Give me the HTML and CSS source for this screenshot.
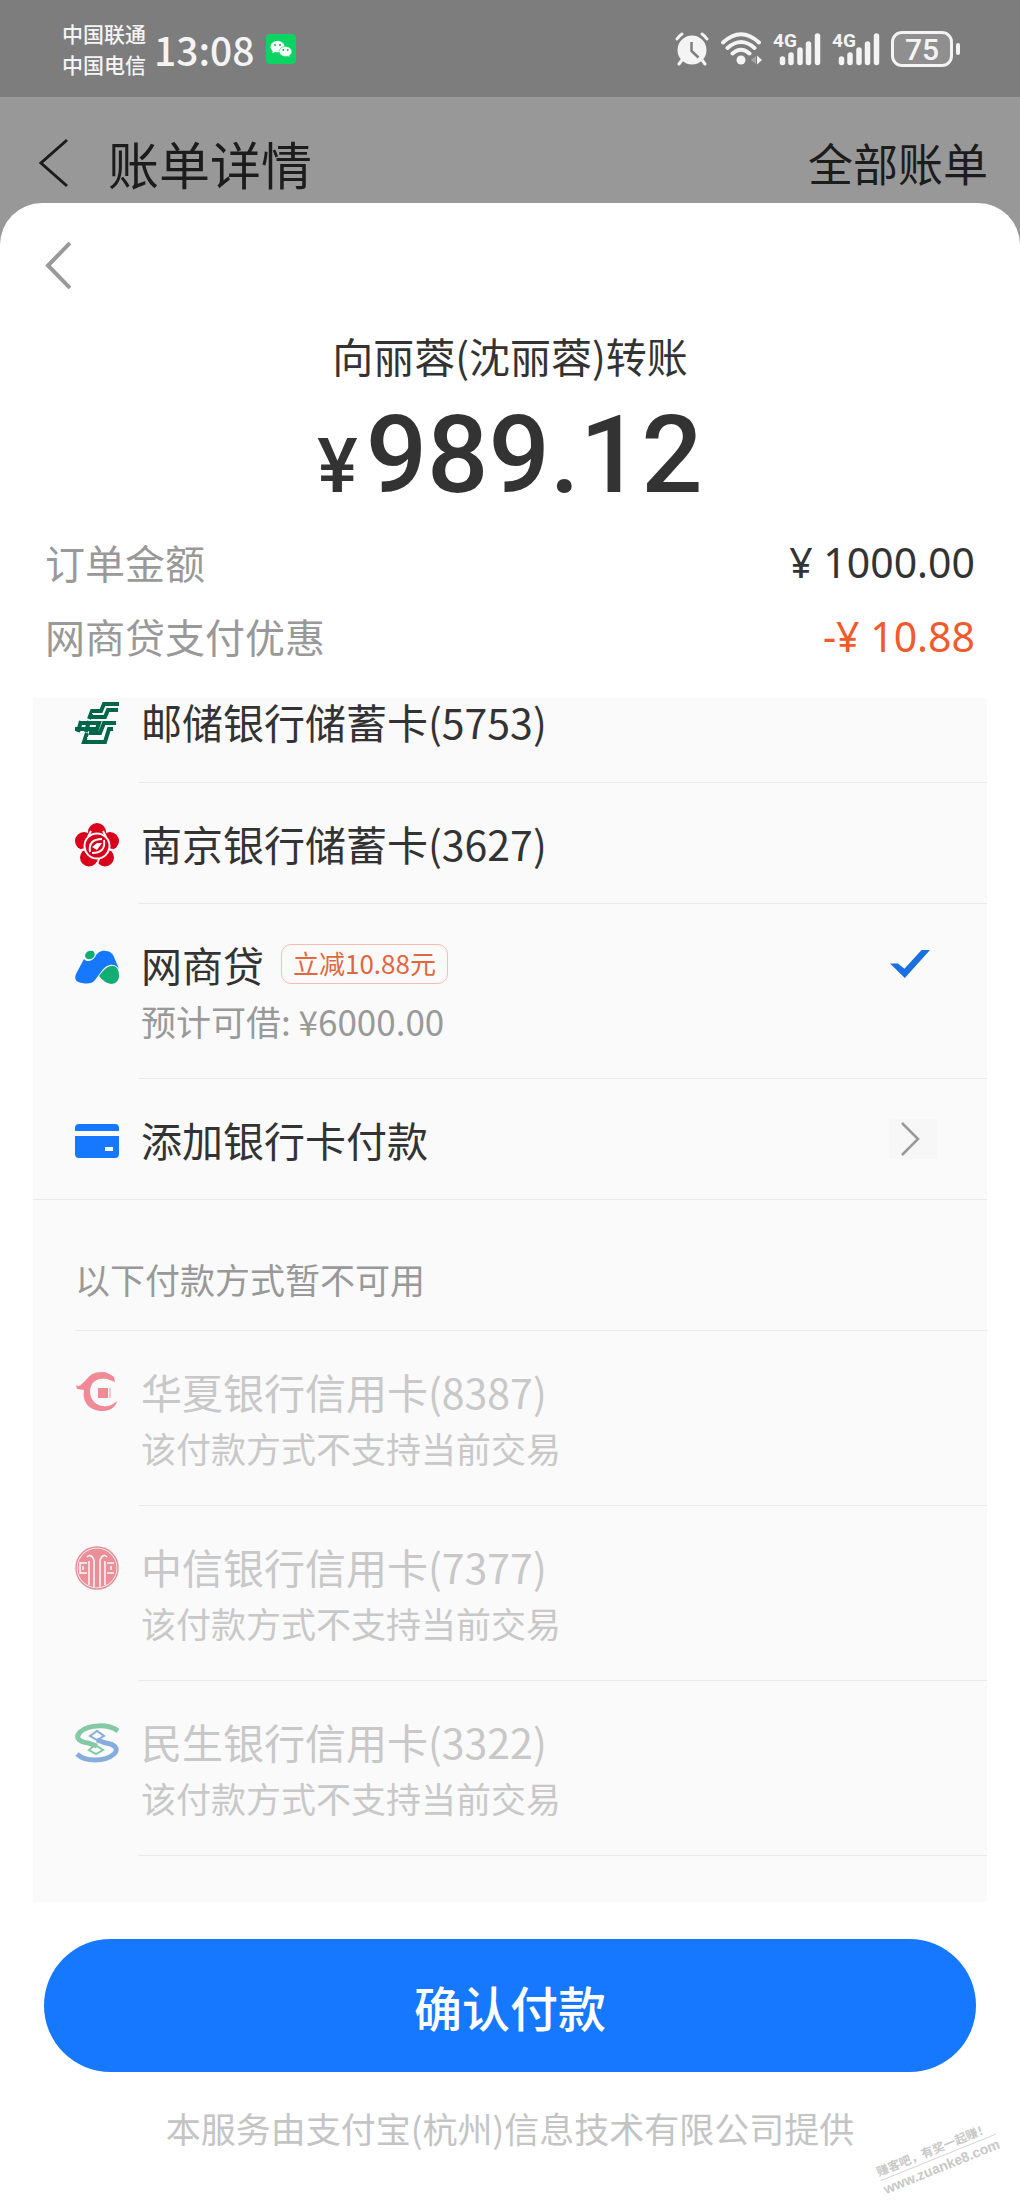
FILE: index.html
```html
<!DOCTYPE html>
<html lang="zh-CN">
<head>
<meta charset="utf-8">
<meta name="viewport" content="width=device-width, initial-scale=1">
<title>账单详情</title>
<link rel="stylesheet" href="styles.css">
</head>
<body>
<div class="status">
  <div class="carriers"><span>中国联通</span><span>中国电信</span></div>
  <span class="clock">13:08</span>
  <svg class="wechat" width="30" height="30" viewBox="0 0 30 30" aria-hidden="true">
    <rect width="30" height="30" rx="4" fill="#0bd463"/>
    <path d="M11.500 7C7.500 7 4.500 9.500 4.500 12.700c0 1.800.900 3.300 2.400 4.300L6.200 19.200l2.700-1.300c.800.200 1.700.400 2.600.400 4 0 7-2.500 7-5.600S15.500 7 11.500 7z" fill="#fff"/>
    <path d="M19.500 12.500c-3.600 0-6.300 2.200-6.300 5s2.700 5 6.300 5c.800 0 1.500-.100 2.200-.300l2.300 1.200-.600-2c1.500-.900 2.400-2.300 2.400-3.900 0-2.800-2.700-5-6.300-5z" fill="#fff" stroke="#0bd463" stroke-width=".6"/>
    <g fill="#0bb455"><circle cx="9" cy="11" r="1"/><circle cx="14" cy="11" r="1"/><circle cx="17.300" cy="16" r=".9"/><circle cx="21.700" cy="16" r=".9"/></g>
  </svg>
  <div class="indicators">
    <svg width="34" height="34" viewBox="0 0 34 34" aria-hidden="true">
      <circle cx="17" cy="18" r="14.500" fill="#f4f4f4"/>
      <g stroke="#f4f4f4" stroke-width="3" stroke-linecap="round" fill="none"><path d="M2 7Q4 4 7 2M27 2Q30 4 32 7M7 28l-3 4M27 28l3 4"/></g>
      <path d="M16.500 10v9l7 6.500" fill="none" stroke="#7d7d7d" stroke-width="2.500"/>
    </svg>
    <svg width="42" height="34" viewBox="0 0 42 34" aria-hidden="true">
      <g fill="none" stroke="#f4f4f4" stroke-width="4" stroke-linecap="round"><path d="M3 10.500Q21-6 39 10.500M7.500 16Q21 4 34.500 16M12.500 21.500Q21 14 29.500 21.500"/></g>
      <circle cx="21" cy="28" r="4.500" fill="#f4f4f4"/>
      <path d="M31 28l5-4v8z" fill="#a5a5a5"/><path d="M37 23.500l5 4.500-5 4.500z" fill="#f4f4f4"/>
    </svg>
    <div class="signal"><span>4G</span>
      <svg width="48" height="34" viewBox="0 0 48 34" aria-hidden="true"><path d="M9.500 27v3.500M18 23v7.500M27 18v12.500M35.500 12v18.500M44.500 4v26.500" stroke="#f4f4f4" stroke-width="5.500" stroke-linecap="round"/></svg>
    </div>
    <div class="signal"><span>4G</span>
      <svg width="48" height="34" viewBox="0 0 48 34" aria-hidden="true"><path d="M9.500 27v3.500M18 23v7.500M27 18v12.500M35.500 12v18.500M44.500 4v26.500" stroke="#f4f4f4" stroke-width="5.500" stroke-linecap="round"/></svg>
    </div>
    <div class="battery"><span>75</span></div>
  </div>
</div>

<header class="bar">
  <button class="plain" type="button" aria-label="返回">
    <svg width="32" height="50" viewBox="0 0 32 50"><path d="M29 2L3 25l26 23" fill="none" stroke="#1c1c1c" stroke-width="3"/></svg>
  </button>
  <h1>账单详情</h1>
  <a class="all" href="#bills">全部账单</a>
</header>

<main class="sheet">
  <button class="plain back" type="button" aria-label="关闭">
    <svg width="26" height="47" viewBox="0 0 26 47"><path d="M25 1L3 23.500 25 46" fill="none" stroke="#999" stroke-width="4"/></svg>
  </button>
  <h2 class="payee">向丽蓉(沈丽蓉)转账</h2>
  <p class="amount"><span class="yen">¥</span><span>989.12</span></p>
  <dl class="summary">
    <div><dt>订单金额</dt><dd>¥ 1000.00</dd></div>
    <div><dt>网商贷支付优惠</dt><dd class="off">-¥ 10.88</dd></div>
  </dl>

  <form class="pay">
    <div class="list">
      <label class="row first">
        <svg class="logo" viewBox="0 0 44 44" aria-hidden="true"><g fill="none" stroke="#006649" stroke-width="4"><path d="M44 3H29l-3 7h-9l-3 8M43 9H33l-3 7H16M5 22h19l-2 6H0M6 20L3 31M14 20l-3 11M41 22H29l-4 10H14M38 28h-4l-4 13H9l3-9"/></g><path d="M12 36.500h14M17 12.500h12" stroke="#f9f9fa" stroke-width="1"/></svg>
        <span class="text"><span class="name">邮储银行储蓄卡(5753)</span></span>
        <input class="tick" type="radio" name="method">
      </label>
      <label class="row">
        <svg class="logo" viewBox="0 0 44 44" aria-hidden="true"><g fill="#d9001b"><circle cx="22" cy="9" r="9"/><circle cx="9" cy="18" r="9"/><circle cx="35" cy="18" r="9"/><circle cx="14" cy="34.500" r="9"/><circle cx="30" cy="34.500" r="9"/></g><circle cx="22" cy="23" r="12.500" fill="#d9001b" stroke="#fafafa" stroke-width="2"/><path d="M16 8l-3 6M28 8l3 6M6 27l5-1M38 27l-5-1M24 36l-3 8" stroke="#fafafa" stroke-width="2"/><path d="M15 29Q13 16 27 16M29 17Q31 30 17 30" fill="none" stroke="#fafafa" stroke-width="2"/><path d="M17 24l5-4h5l-5 7z" fill="#fafafa"/></svg>
        <span class="text"><span class="name">南京银行储蓄卡(3627)</span></span>
        <input class="tick" type="radio" name="method">
      </label>
      <label class="row">
        <svg class="logo" viewBox="0 0 44 44" aria-hidden="true"><path d="M1 30L9 15c2 3 8 3 11-2 2-4 6-7 11-6 4 0 7 3 8 6l5 12c-4-6-12-6-18 3l-6 8c-3 4-8 4-13 3C1 38-1 35 1 30z" fill="#1677ff"/><path d="M10 11c1-4 5-5 8-4 3 2 2 7-2 8-3 1-6 0-6-4z" fill="#12ad73"/><path d="M24 32c5-7 10-11 15-10 4 1 5 6 5 10 0 5-4 8-8 8-5-1-9-4-12-8z" fill="#12ad73"/></svg>
        <span class="text">
          <span class="name">网商贷<span class="badge">立减10.88元</span></span>
          <span class="note">预计可借: ¥6000.00</span>
        </span>
        <input class="tick" type="radio" name="method" checked>
      </label>
      <a class="row wide" href="#add">
        <svg class="logo" viewBox="0 0 44 44" aria-hidden="true"><path d="M0 12V9q0-4 4-4h36q4 0 4 4v3zM0 17h44v18q0 4-4 4H4q-4 0-4-4z" fill="#1677ff"/><rect x="30" y="28" width="8" height="4" fill="#fff"/></svg>
        <span class="text"><span class="name">添加银行卡付款</span></span>
        <svg class="go" width="48" height="40" viewBox="0 0 48 40" aria-hidden="true"><path d="M13 4l16 16-16 16" fill="none" stroke="#999" stroke-width="2.500"/></svg>
      </a>
      <h3 class="section">以下付款方式暂不可用</h3>
      <label class="row off-row">
        <svg class="logo" viewBox="0 0 44 44" aria-hidden="true"><path d="M1 14c4 3 6-2 9-4 5-6 8-9 17-9 5 0 8 2 12 5l1 5-8-3c-6-1-12 0-15 5-5 9 0 21 11 22 7 1 10-2 14-5-1 6-7 10-14 10C15 40 7 32 9 19L2 18z" fill="#f08a96"/><rect x="23" y="17" width="10" height="10" fill="#f08a96"/><path d="M35 17v10" stroke="#f8c9ce" stroke-width="2"/></svg>
        <span class="text"><span class="name">华夏银行信用卡(8387)</span><span class="note">该付款方式不支持当前交易</span></span>
        <input class="tick" type="radio" name="method" disabled>
      </label>
      <label class="row off-row">
        <svg class="logo" viewBox="0 0 44 44" aria-hidden="true"><circle cx="22" cy="22" r="21" fill="#fafafa" stroke="#ea8f98" stroke-width="1.500"/><circle cx="22" cy="22" r="19.500" fill="#ea8f98"/><g fill="none" stroke="#fafafa" stroke-width="1.500"><path d="M19 41V14Q16 7 12 11M25 41V14Q28 7 32 11M14 39V15M30 39V15"/><path d="M12 17H5v10h7M8 20v4M39 17h-7M39 27h-7M36 20v4"/></g></svg>
        <span class="text"><span class="name">中信银行信用卡(7377)</span><span class="note">该付款方式不支持当前交易</span></span>
        <input class="tick" type="radio" name="method" disabled>
      </label>
      <label class="row off-row">
        <svg class="logo" viewBox="0 0 44 44" aria-hidden="true"><g fill="none" stroke="#85c8a4"><path d="M43 10C34 3 14 3 5 11-1 18 6 21 13 22l9 3" stroke-width="5"/><path d="M14 29l6-5 8 5-7 4z" stroke-width="2"/></g><g fill="none" stroke="#86aedd"><path d="M2 33c8 8 28 8 37 0 6-6-1-10-8-11l-9-3" stroke-width="5"/><path d="M15 15l7-5 7 5-7 4z" stroke-width="2"/></g></svg>
        <span class="text"><span class="name">民生银行信用卡(3322)</span><span class="note">该付款方式不支持当前交易</span></span>
        <input class="tick" type="radio" name="method" disabled>
      </label>
    </div>
    <button class="confirm" type="submit">确认付款</button>
  </form>
  <p class="provider">本服务由支付宝(杭州)信息技术有限公司提供</p>
  <div class="mark"><span>赚客吧，有奖一起赚！</span><span class="url">www.zuanke8.com</span></div>
</main>
</body>
</html>
```
FILE: styles.css
```css
* { box-sizing: border-box; }
body {
  display: flex;
  flex-direction: column;
  min-height: 100vh;
  margin: 0;
  background: #989898;
  color: #333;
  font-family: "Noto Sans CJK SC", "Noto Sans", sans-serif;
  font-size: 41px;
}
h1, h2, h3, p, dl, dd { margin: 0; font-weight: 400; }
svg { display: block; flex: none; }
a { color: inherit; text-decoration: none; }
.plain { border: 0; padding: 0; background: none; display: block; }

.status {
  display: flex;
  align-items: center;
  height: 97px;
  padding: 0 60px 0 62px;
  background: #7d7d7d;
  color: #f4f4f4;
}
.carriers { display: flex; flex-direction: column; font-size: 21px; line-height: 31px; font-weight: 500; }
.clock { margin-left: 8px; font-size: 39px; line-height: 48px; font-weight: 500; }
.wechat { margin-left: 11px; }
.indicators { display: flex; align-items: center; gap: 11px; margin-left: auto; }
.signal { display: grid; }
.signal svg, .signal span { grid-area: 1 / 1; }
.signal span { font: 700 19px/18px Roboto, sans-serif; }
.battery { display: flex; align-items: center; }
.battery span {
  width: 62px;
  height: 36px;
  border: 3px solid #f4f4f4;
  border-radius: 11px;
  background: #8f8f8f;
  font: 500 30px/32px Roboto, sans-serif;
  text-align: center;
}
.battery::after { content: ""; width: 4px; height: 12px; margin-left: 3px; border-radius: 2px; background: #f4f4f4; }

.bar {
  display: flex;
  align-items: center;
  height: 106px;
  padding: 26px 32px 0 38px;
  color: #1c1c1c;
}
.bar h1 { margin-left: 38px; font-size: 51px; line-height: 70px; }
.all { margin-left: auto; font-size: 45px; line-height: 70px; }

.sheet {
  position: relative;
  flex: 1;
  padding: 39px 33px 48px;
  border-radius: 42px 42px 0 0;
  background: #fff;
}
.back { margin-left: 12px; }
.payee { margin-top: 36px; font-size: 41px; line-height: 60px; text-align: center; }
.amount {
  display: flex;
  justify-content: center;
  align-items: baseline;
  gap: 8px;
  margin-top: 5px;
  font: 500 108px/130px Roboto, sans-serif;
}
.yen { font-size: 76px; line-height: 80px; }
.summary { padding: 5px 12px 25px; }
.summary div { display: flex; justify-content: space-between; line-height: 74px; }
dt { color: #999; font-size: 40px; }
dd { font-family: "Noto Sans", sans-serif; }
.off { color: #f15a2b; }

.list { padding-bottom: 46px; background: #fafafa; }
.row {
  display: flex;
  padding-left: 42px;
  background: linear-gradient(#e9e9e9, #e9e9e9) 106px 100% / 100% 1px no-repeat;
}
.wide { background-position: 0 100%; }
.logo { width: 44px; height: 44px; margin: 40px 20px 0 0; }
.text { flex: 1; display: flex; flex-direction: column; padding: 30px 0 31px; }
.name { display: flex; align-items: center; gap: 17px; padding-left: 2px; line-height: 60px; }
.note { padding-left: 2px; color: #999; font-size: 35px; line-height: 54px; }
.first .logo { margin-top: 3px; }
.first .text { padding: 0 0 39px; }
.first .name { line-height: 46px; }
.first .tick { margin-top: 8px; }
.off-row { color: #c8c8c8; }
.off-row .note { color: #c8c8c8; }
.badge {
  height: 40px;
  padding: 0 11px;
  border: 1px solid #f3bfae;
  border-radius: 10px;
  color: #e2673f;
  font-size: 26px;
  line-height: 36px;
}
.tick { appearance: none; width: 40px; height: 28px; margin: 46px 57px 0 0; }
.tick:checked { background: #1a70e0; clip-path: polygon(0 48%, 20% 48%, 36% 67%, 79% 0, 100% 0, 37% 100%); }
.go { margin: 40px 50px 0 0; background: #f7f7f7; }
.section {
  margin-left: 42px;
  padding: 52px 0 24px;
  border-bottom: 1px solid #e9e9e9;
  color: #999;
  font-size: 35px;
  line-height: 54px;
}

.pay { margin: 0; }
.confirm {
  display: block;
  width: calc(100% - 22px);
  height: 133px;
  margin: 37px auto 0;
  border: 0;
  border-radius: 67px;
  background: #1677ff;
  color: #fff;
  font-family: inherit;
  font-size: 48px;
  font-weight: 500;
}
.provider { margin-top: 26px; color: #c4c4c4; font-size: 35px; line-height: 60px; text-align: center; }
.mark {
  position: absolute;
  right: 20px;
  bottom: 34px;
  display: flex;
  flex-direction: column;
  transform: rotate(-22deg);
  color: #c8c8c8;
  font-size: 12px;
  font-weight: 700;
  line-height: 18px;
}
.url { border-top: 1px solid #d8d8d8; font: 700 14px/18px "Liberation Sans", sans-serif; }
```
